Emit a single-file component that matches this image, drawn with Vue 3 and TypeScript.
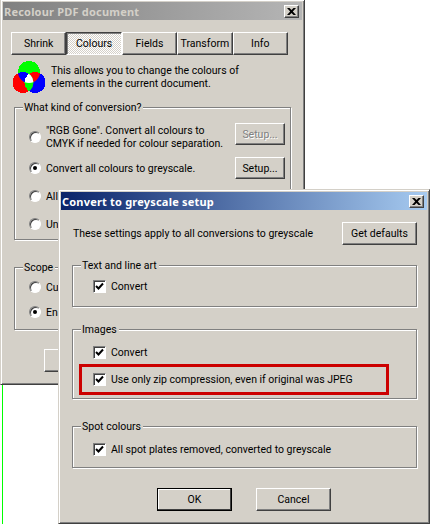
<script setup lang="ts">
const tabs: string[] = ['Shrink', 'Colours', 'Fields', 'Transform', 'Info']
</script>

<template>
  <div class="desk">
    <div class="greenline"></div>

    <section class="win back">
      <header class="title inactive">
        <span>Recolour PDF document</span>
        <button class="close"><svg width="9" height="7" viewBox="0 0 9 7"><path d="M0 0h2.500l2 2 2-2H9L5.800 3.500 9 7H6.500l-2-2-2 2H0l3.200-3.500z" fill="#000"/></svg></button>
      </header>
      <div class="tabs">
        <button v-for="t in tabs" :key="t" class="btn tab" :class="{ pressed: t === 'Colours' }">{{ t }}</button>
      </div>
      <div class="intro">
        <svg class="logo" width="32" height="33" viewBox="13 60 32 33" shape-rendering="crispEdges">
          <defs>
            <clipPath id="cg"><circle cx="29" cy="71" r="11" /></clipPath>
            <clipPath id="cr"><circle cx="23" cy="81.500" r="10.500" /></clipPath>
          </defs>
          <circle cx="29" cy="71" r="11" fill="#00ff00" />
          <circle cx="23" cy="81.500" r="10.500" fill="#ff0000" />
          <circle cx="35" cy="81.500" r="10.500" fill="#0000ff" />
          <g clip-path="url(#cg)"><circle cx="23" cy="81.500" r="10.500" fill="#0000ff" /><circle cx="35" cy="81.500" r="10.500" fill="#ff0000" /></g>
          <g clip-path="url(#cr)"><circle cx="35" cy="81.500" r="10.500" fill="#00ff00" /></g>
          <g clip-path="url(#cg)"><g clip-path="url(#cr)"><circle cx="35" cy="81.500" r="10.500" fill="#fff" /></g></g>
        </svg>
        <p>This allows you to change the colours of<br />elements in the current document.</p>
      </div>

      <div class="group kind">
        <span class="legend">What kind of conversion?</span>
        <div class="row first">
          <i class="radio"></i>
          <span class="grow">"RGB Gone". Convert all colours to<br />CMYK if needed for colour separation.</span>
          <button class="btn setup" disabled>Setup...</button>
        </div>
        <div class="row">
          <i class="radio on"></i>
          <span class="grow">Convert all colours to greyscale.</span>
          <button class="btn setup">Setup...</button>
        </div>
        <div class="row"><i class="radio"></i><span class="grow">All</span></div>
        <div class="row"><i class="radio"></i><span class="grow">Un</span></div>
      </div>

      <div class="group scope">
        <span class="legend">Scope</span>
        <div class="row"><i class="radio"></i><span>Cu</span></div>
        <div class="row"><i class="radio on"></i><span>En</span></div>
      </div>

      <div class="actions backactions">
        <button class="btn wide"></button>
        <button class="btn wide"></button>
      </div>
    </section>

    <section class="win front">
      <header class="title active">
        <span>Convert to greyscale setup</span>
        <button class="close"><svg width="9" height="7" viewBox="0 0 9 7"><path d="M0 0h2.500l2 2 2-2H9L5.800 3.500 9 7H6.500l-2-2-2 2H0l3.200-3.500z" fill="#000"/></svg></button>
      </header>
      <div class="lead">
        <span>These settings apply to all conversions to greyscale</span>
        <button class="btn wide">Get defaults</button>
      </div>

      <div class="group fg g1">
        <span class="legend">Text and line art</span>
        <div class="check"><i class="box"><svg width="9" height="9" viewBox="0 0 9 9"><path d="M1 4l2.500 2.500L8 1.500" fill="none" stroke="#000" stroke-width="2" /></svg></i><span>Convert</span></div>
      </div>

      <div class="group fg g2">
        <span class="legend">Images</span>
        <div class="check"><i class="box"><svg width="9" height="9" viewBox="0 0 9 9"><path d="M1 4l2.500 2.500L8 1.500" fill="none" stroke="#000" stroke-width="2" /></svg></i><span>Convert</span></div>
        <div class="highlight">
          <div class="check"><i class="box"><svg width="9" height="9" viewBox="0 0 9 9"><path d="M1 4l2.500 2.500L8 1.500" fill="none" stroke="#000" stroke-width="2" /></svg></i><span>Use only zip compression, even if original was JPEG</span></div>
        </div>
      </div>

      <div class="group fg g3">
        <span class="legend">Spot colours</span>
        <div class="check"><i class="box"><svg width="9" height="9" viewBox="0 0 9 9"><path d="M1 4l2.500 2.500L8 1.500" fill="none" stroke="#000" stroke-width="2" /></svg></i><span>All spot plates removed, converted to greyscale</span></div>
      </div>

      <div class="actions">
        <button class="btn wide default">OK</button>
        <button class="btn wide">Cancel</button>
      </div>
    </section>
  </div>
</template>

<style>
html, body { background: #fff; margin: 0; }
</style>

<style scoped>
.desk {
  position: relative;
  width: 430px;
  height: 524px;
  overflow: hidden;
  background: #fff;
  font: 10.500px/13px Roboto, "Liberation Sans", Arial, sans-serif;
  color: #000;
}
.greenline {
  position: absolute;
  left: 2px;
  top: 385px;
  width: 1px;
  height: 139px;
  background: #00ff00;
}
.win {
  position: absolute;
  box-sizing: border-box;
  padding: 2px;
  background: #d4d0c8;
  border: 1px solid;
  border-color: #d4d0c8 #404040 #404040 #d4d0c8;
  box-shadow: inset 1px 1px 0 #fff, inset -1px -1px 0 #808080;
}
.back { left: 0; top: -1px; width: 305px; height: 386px; }
.front { left: 58px; top: 189px; width: 372px; height: 335px; }
.title {
  display: flex;
  align-items: center;
  justify-content: space-between;
  height: 18px;
  padding: 0 3px 0 1px;
  font: bold 11px/13px "Noto Sans", sans-serif;
  letter-spacing: 0.2px;
}
.inactive { background: linear-gradient(90deg, #808080, #b5b5b5); color: #d4d0c8; }
.active { background: linear-gradient(90deg, #0a246a, #a6caf0); color: #fff; }
.close {
  display: flex;
  align-items: center;
  justify-content: center;
  box-sizing: border-box;
  width: 15px;
  height: 13px;
  padding: 0;
  background: #d4d0c8;
  border: 1px solid;
  border-color: #fff #404040 #404040 #fff;
  box-shadow: inset -1px -1px 0 #808080;
}
.btn {
  box-sizing: border-box;
  padding: 0;
  background: #d4d0c8;
  border: 1px solid;
  border-color: #fff #404040 #404040 #fff;
  box-shadow: inset -1px -1px 0 #808080;
  font: inherit;
  color: #000;
}
.btn:disabled { color: #808080; text-shadow: 1px 1px 0 #fff; }
.tabs { display: flex; margin: 12px 0 0 8px; }
.tab { width: 55.400px; height: 23px; }
.pressed {
  border-color: #404040 #fff #fff #404040;
  box-shadow: inset 1px 1px 0 #808080;
  background: repeating-conic-gradient(#fff 0 25%, #d4d0c8 0 50%) 0 0 / 2px 2px;
}
.intro { display: flex; margin: 6px 0 0 10px; height: 33px; }
.intro p { margin: 3px 0 0 6px; }
.logo { display: block; }
.group {
  position: relative;
  box-sizing: border-box;
  border: 1px solid #808080;
  box-shadow: 1px 1px 0 #fff, inset 1px 1px 0 #fff;
}
.legend {
  position: absolute;
  left: 8px;
  top: -7px;
  padding: 0 2px 0 1px;
  background: #d4d0c8;
  white-space: nowrap;
}
.kind {
  display: flex;
  flex-direction: column;
  gap: 6px;
  width: 277px;
  height: 133px;
  margin: 13px 0 0 11px;
  padding: 15px 5px 0 14px;
}
.scope {
  display: flex;
  flex-direction: column;
  gap: 3px;
  width: 277px;
  height: 63px;
  margin: 27px 0 0 11px;
  padding: 8px 5px 0 14px;
}
.row { display: flex; align-items: center; gap: 5px; height: 22px; flex: none; }
.row.first { height: 28px; }
.row.first .setup { align-self: flex-start; }
.grow { flex: 1; white-space: nowrap; }
.radio {
  position: relative;
  box-sizing: border-box;
  flex: none;
  width: 12px;
  height: 12px;
  background: #fff;
  border-radius: 50%;
  border: 1px solid;
  border-color: #808080 #fff #fff #808080;
  box-shadow: inset 1px 1px 0 #404040;
}
.radio.on::after {
  content: "";
  position: absolute;
  left: 3px;
  top: 3px;
  width: 4px;
  height: 4px;
  border-radius: 50%;
  background: #000;
}
.setup { width: 50px; height: 22px; flex: none; }
.actions { display: flex; gap: 24px; margin: 20px 0 0 96px; }
.backactions { margin: 19px 0 0 41px; }
.wide { width: 75px; height: 23px; flex: none; }
.default { border: 1px solid #000; box-shadow: inset -1px -1px 0 #404040, inset 1px 1px 0 #fff; }
.lead {
  display: flex;
  align-items: center;
  justify-content: space-between;
  margin-top: 12px;
  padding: 0 10px 0 12px;
}
.fg { width: 345px; margin-left: 11px; padding: 10px 0 0 20px; }
.g1 { height: 42px; margin-top: 20px; }
.g2 { height: 70px; margin-top: 22px; padding-top: 12px; }
.g3 { height: 42px; margin-top: 27px; padding-top: 12px; }
.check { display: flex; align-items: center; gap: 5px; height: 21px; white-space: nowrap; }
.box {
  display: flex;
  align-items: center;
  justify-content: center;
  box-sizing: border-box;
  flex: none;
  width: 13px;
  height: 13px;
  background: #fff;
  border: 1px solid;
  border-color: #808080 #fff #fff #808080;
  box-shadow: inset 1px 1px 0 #404040;
}
.highlight {
  box-sizing: border-box;
  width: 310px;
  height: 31px;
  margin: 1px 0 0 -14px;
  padding: 2px 0 0 11px;
  border: 3px solid #cc0000;
}
</style>
